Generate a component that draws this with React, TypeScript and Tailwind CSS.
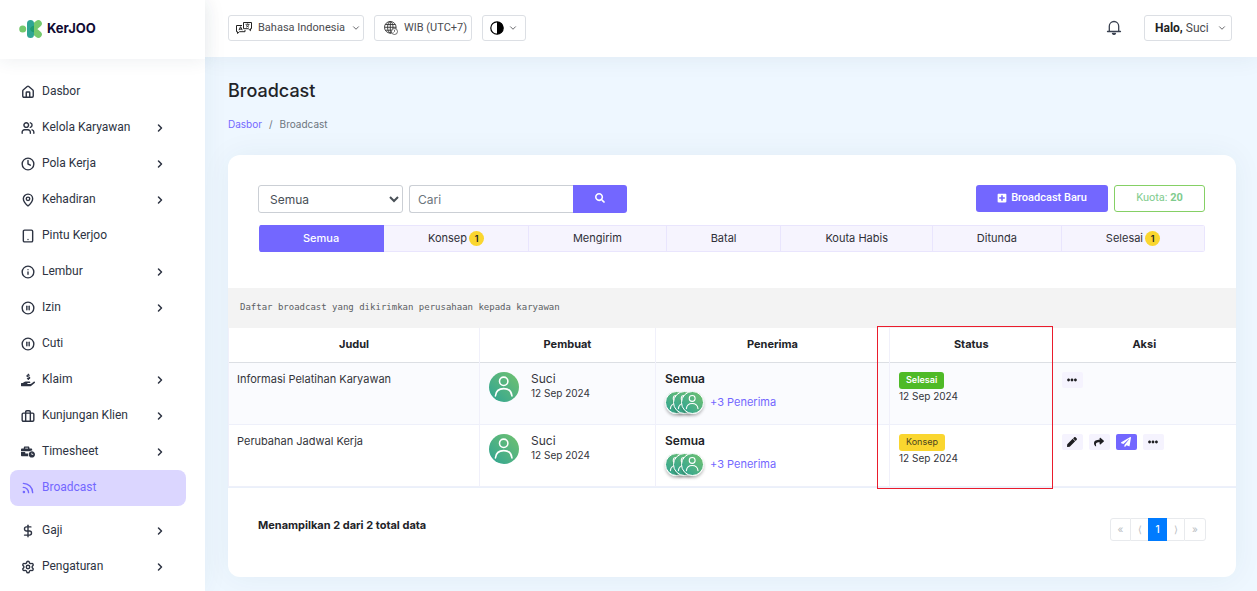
import type { ComponentType, ReactNode } from "react";
import {
  House,
  Users,
  Clock,
  MapPin,
  Tablet,
  Info,
  CirclePause,
  Rss,
  DollarSign,
  Settings,
  ChevronRight,
  ChevronDown,
} from "lucide-react";
import {
  FaHandHoldingUsd,
  FaBusinessTime,
  FaSearch,
  FaPlusSquare,
  FaPen,
  FaShare,
  FaPaperPlane,
  FaEllipsisH,
} from "react-icons/fa";
import clsx from "clsx";

type IconType = ComponentType<{ className?: string }>;

function Suitcase({ className }: { className?: string }) {
  return (
    <svg className={className} viewBox="0 0 24 24" fill="none" stroke="currentColor" strokeWidth="2.4" strokeLinejoin="round">
      <rect x="2" y="7" width="20" height="14" rx="2" />
      <path d="M8 21V5a2 2 0 0 1 2-2h4a2 2 0 0 1 2 2v16" />
    </svg>
  );
}

const NAV_ITEMS: { label: string; icon: IconType; sub?: boolean; active?: boolean }[] = [
  { label: "Dasbor", icon: House },
  { label: "Kelola Karyawan", icon: Users, sub: true },
  { label: "Pola Kerja", icon: Clock, sub: true },
  { label: "Kehadiran", icon: MapPin, sub: true },
  { label: "Pintu Kerjoo", icon: Tablet },
  { label: "Lembur", icon: Info, sub: true },
  { label: "Izin", icon: CirclePause, sub: true },
  { label: "Cuti", icon: CirclePause },
  { label: "Klaim", icon: FaHandHoldingUsd, sub: true },
  { label: "Kunjungan Klien", icon: Suitcase, sub: true },
  { label: "Timesheet", icon: FaBusinessTime, sub: true },
  { label: "Broadcast", icon: Rss, active: true },
  { label: "Gaji", icon: DollarSign, sub: true },
  { label: "Pengaturan", icon: Settings, sub: true },
];

const TABS: { label: string; count?: number }[] = [
  { label: "Semua" },
  { label: "Konsep", count: 1 },
  { label: "Mengirim" },
  { label: "Batal" },
  { label: "Kouta Habis" },
  { label: "Ditunda" },
  { label: "Selesai", count: 1 },
];

const ROWS = [
  { title: "Informasi Pelatihan Karyawan", author: "Suci", date: "12 Sep 2024", status: "Selesai" },
  { title: "Perubahan Jadwal Kerja", author: "Suci", date: "12 Sep 2024", status: "Konsep" },
];

function Logo() {
  return (
    <a href="#" className="flex items-center gap-1 text-[13px] font-bold text-[#110a33]">
      <svg className="h-5 w-6" viewBox="0 0 24 20">
        <circle cx="3.7" cy="10" r="3.5" fill="#76c96d" />
        <path d="M13 10 19.3 4.6M13 10l6.3 5.4" stroke="#76c96d" strokeWidth="7" strokeLinecap="round" />
        <rect x="8" y="1" width="7" height="18" rx="3.5" fill="#2fa594" />
        <path d="M15 6.8v6.4a4.6 4.6 0 0 1-4-3.2 4.6 4.6 0 0 1 4-3.2Z" fill="#1f9a72" />
      </svg>
      KerJOO
    </a>
  );
}

function Sidebar() {
  return (
    <aside className="relative z-10 w-[205px] shrink-0 bg-white shadow-[0_0_24px_rgba(40,60,90,0.06)]">
      <div className="flex h-[59px] items-center px-[19px] pb-0.5 shadow-[0_2px_16px_rgba(40,60,90,0.08)]">
        <Logo />
      </div>
      <nav className="pt-[15px] pr-[19px] pl-2.5 font-['Roboto',sans-serif] text-xs">
        {NAV_ITEMS.map(({ label, icon: Icon, sub, active }) => (
          <a
            key={label}
            href="#"
            className={clsx(
              "flex h-9 items-center gap-[7px] rounded-lg pr-5 pl-[11px]",
              active ? "mb-[7px] bg-[#dbd6ff] text-[#7367ff]" : "text-[#2d3342]"
            )}
            aria-current={active ? "page" : undefined}
          >
            <Icon className="size-[14px] shrink-0 [&.lucide]:stroke-[2.4]" />
            <span className="flex-1 pb-0.5">{label}</span>
            {sub && <ChevronRight className="size-3" strokeWidth={3} />}
          </a>
        ))}
      </nav>
    </aside>
  );
}

function TranslateIcon() {
  return (
    <svg className="h-3 w-4 shrink-0" viewBox="0 0 16 12" fill="none" stroke="#222" strokeWidth="1">
      <path d="M7.5.5h8v6.2h-1v2L12.3 6.7H7.5Z" />
      <path d="M6 3.5H.5v6.2h1v1.8l2-1.8H9V8" />
      <path d="M9.5 2.3h4M11.5 1.5v.8M10 5.2c1.5-.5 2.5-1.5 2.8-2.8M10.3 3.2c.5 1 1.5 1.7 2.7 2" strokeWidth=".8" />
      <path d="m3 8.2 1.6-3.5 1.6 3.5M3.6 7.1h2" />
    </svg>
  );
}

function GlobeIcon() {
  return (
    <svg className="size-3.5 shrink-0" viewBox="0 0 14 14" fill="none" stroke="#333" strokeWidth=".9">
      <circle cx="6.3" cy="6.3" r="5.8" />
      <ellipse cx="6.3" cy="6.3" rx="2.7" ry="5.8" />
      <path d="M.5 6.3h11.6M1.3 3.5h10M1.3 9.2h7M6.3.5v11.6" />
      <circle cx="10.5" cy="10.5" r="3" fill="#fff" strokeWidth=".7" />
      <path d="M10.5 8.8v1.7l-1 1" strokeWidth=".7" />
    </svg>
  );
}

function ContrastIcon() {
  return (
    <svg className="size-3.5" viewBox="0 0 14 14">
      <circle cx="7" cy="7" r="6.2" fill="#fff" stroke="#000" strokeWidth="1.2" />
      <path d="M7 .8a6.2 6.2 0 0 1 0 12.4Z" fill="#000" />
    </svg>
  );
}

function BellIcon() {
  return (
    <svg className="size-4" viewBox="0 0 16 16" fill="none" stroke="#3a4150" strokeWidth="1.3" strokeLinecap="round" strokeLinejoin="round">
      <path d="M1.5 11.5h13M3.3 11.5V6.2a4.7 4.7 0 0 1 9.4 0v5.3" />
      <path d="M6.5 13.5c.7 1.2 2.3 1.2 3 0Z" fill="#3a4150" />
    </svg>
  );
}

function HeaderButton({ className, children, label }: { className?: string; children: ReactNode; label?: string }) {
  return (
    <button
      aria-label={label}
      className={clsx(
        "flex h-[26px] items-center rounded-[3px] border border-[#dcdfe4] font-['Roboto',sans-serif] whitespace-nowrap text-[#4b4b4f]",
        className
      )}
    >
      {children}
    </button>
  );
}

function Topbar() {
  return (
    <header className="flex h-[57px] items-center gap-2.5 bg-white pr-[25px] pb-px pl-[23px] shadow-[0_0_24px_rgba(40,60,90,0.08)]">
      <HeaderButton className="w-[136px] gap-1.5 pr-1.5 pl-[7px] text-[11px]">
        <TranslateIcon />
        Bahasa Indonesia
        <ChevronDown className="ml-auto size-2.5 shrink-0" />
      </HeaderButton>
      <HeaderButton className="w-[98px] gap-1.5 pl-[9px] text-[11px]">
        <GlobeIcon />
        WIB (UTC+7)
      </HeaderButton>
      <HeaderButton className="gap-1 px-[7px]" label="Tema">
        <ContrastIcon />
        <ChevronDown className="size-2.5" />
      </HeaderButton>
      <button className="mr-3 ml-auto" aria-label="Notifikasi">
        <BellIcon />
      </button>
      <HeaderButton className="w-[88px] pr-1 pl-2.5 text-xs">
        <span>
          <b className="text-[#222]">Halo,</b> Suci
        </span>
        <ChevronDown className="ml-auto size-2.5" />
      </HeaderButton>
    </header>
  );
}

function Avatar({ className }: { className?: string }) {
  return (
    <span
      className={clsx(
        "flex shrink-0 items-center justify-center rounded-full bg-linear-to-tr from-[#2aa392] to-[#70c26d]",
        className
      )}
    >
      <svg className="size-[78%]" viewBox="0 0 24 24" fill="none" stroke="#fff" strokeWidth="1.6" strokeLinecap="round">
        <circle cx="12" cy="6.5" r="4.3" />
        <path d="M3.5 21.5c.5-5 4-7.500 8.500-7.500s8 2.500 8.500 7.500" />
      </svg>
    </span>
  );
}

function Filters() {
  return (
    <div className="flex items-start">
      <select
        aria-label="Filter"
        defaultValue="Semua"
        className="h-7 w-[145px] rounded-[3px] border border-[#cbcfd5] bg-white pl-[7px] text-xs text-[#495057]"
      >
        <option>Semua</option>
      </select>
      <input
        aria-label="Cari"
        placeholder="Cari"
        className="ml-1.5 h-7 w-[164px] rounded-l-[3px] border border-r-0 border-[#cbcfd5] px-2 text-xs placeholder:text-[#6c757d]"
      />
      <button
        aria-label="Cari broadcast"
        className="flex h-7 w-[54px] items-center justify-center rounded-r-[3px] bg-[#7367ff] pb-0.5 text-white"
      >
        <FaSearch className="size-2.5" />
      </button>
      <button className="ml-auto flex h-[27px] w-[132px] items-center justify-center gap-1 rounded-[3px] bg-[#7367ff] pb-px font-['Roboto',sans-serif] text-[11px] font-medium text-white">
        <FaPlusSquare className="size-2.5" />
        Broadcast Baru
      </button>
      <button className="ml-1.5 h-[27px] w-[91px] rounded-[3px] border border-[#85d065] pb-px font-['Roboto',sans-serif] text-[11px] text-[#7fcb8e]">
        Kuota: <b>20</b>
      </button>
    </div>
  );
}

function StatusTabs() {
  return (
    <div className="mt-3 ml-px flex h-[27px] overflow-hidden rounded-[3px] text-[11px]">
      {TABS.map(({ label, count }, i) => (
        <button
          key={label}
          className={clsx(
            "flex flex-auto items-center justify-center gap-0.5 border-y border-r px-4",
            i === 0 ? "border-[#7367ff] bg-[#7367ff] font-medium text-white" : "border-[#e9e5fd] bg-[#f6f4fe] text-[#2f3038]"
          )}
        >
          {label}
          {count && (
            <span className="flex size-[15px] items-center justify-center rounded-full bg-[#fad62f] text-[9px] font-semibold text-[#222]">
              {count}
            </span>
          )}
        </button>
      ))}
    </div>
  );
}

function ActionButton({ icon: Icon, label, primary }: { icon: IconType; label: string; primary?: boolean }) {
  return (
    <button
      aria-label={label}
      className={clsx(
        "flex h-4 w-[21px] items-center justify-center rounded-[2px]",
        primary ? "bg-[#7367ff] text-white" : "bg-[#f5f3fe] text-[#1e1e22]"
      )}
    >
      <Icon className="size-2.5" />
    </button>
  );
}

function BroadcastTable() {
  return (
    <table className="w-full table-fixed border-collapse text-[11px] text-[#34353b]">
      <colgroup>
        <col className="w-[251px]" />
        <col className="w-[176px]" />
        <col className="w-[234px]" />
        <col className="w-[163px]" />
        <col className="w-[184px]" />
      </colgroup>
      <thead>
        <tr className="h-[34px] border-b border-[#dcdfe4] font-semibold text-[#222328]">
          <th className="border-x border-[#f0f0fa] pb-0.5">Judul</th>
          <th className="border-r border-[#f0f0fa] pb-0.5">Pembuat</th>
          <th className="border-r border-[#f0f0fa] pb-0.5">Penerima</th>
          <th className="relative pb-0.5">
            Status
            {/* highlight around the whole status column */}
            <span className="pointer-events-none absolute -top-0.5 right-0 -left-[13px] h-[163px] border border-[#ea1c2c]" />
          </th>
          <th className="border-r border-[#f0f0fa] pb-0.5">Aksi</th>
        </tr>
      </thead>
      <tbody>
        {ROWS.map((row) => (
          <tr key={row.title} className="h-[62px] border-b border-[#eef0fa] align-top odd:bg-[#fafbfe]">
            <td className="border-x border-[#f0f0fa] px-2 pt-2">{row.title}</td>
            <td className="border-r border-[#f0f0fa] px-[9px] pt-[9px]">
              <div className="flex gap-3">
                <Avatar className="size-[30px]" />
                <div>
                  <div className="text-xs leading-[14px]">{row.author}</div>
                  <div className="text-[10px] leading-[14px]">{row.date}</div>
                </div>
              </div>
            </td>
            <td className="border-r border-[#f0f0fa] px-[9px] pt-2">
              <div className="text-xs leading-4 font-semibold text-[#222328]">Semua</div>
              <div className="mt-1 flex items-center">
                <Avatar className="size-[23px] border border-white shadow-[0_2px_3px_rgba(0,0,0,0.25)]" />
                <Avatar className="-ml-[15px] size-[23px] border border-white shadow-[0_2px_3px_rgba(0,0,0,0.25)]" />
                <Avatar className="-ml-[15px] size-[23px] border border-white shadow-[0_2px_3px_rgba(0,0,0,0.25)]" />
                <a href="#" className="ml-1.5 text-[11px] text-[#7367ff]">
                  +3 Penerima
                </a>
              </div>
            </td>
            <td className="px-[9px] pt-[9px]">
              <div
                className={clsx(
                  "flex h-[17px] w-fit items-center rounded-[3px] px-[7px] text-[9px]",
                  row.status === "Selesai" ? "bg-[#4fba27] font-semibold text-white" : "bg-[#fad62f] text-[#4a4420]"
                )}
              >
                {row.status}
              </div>
              <div className="text-[10px] leading-[14px]">{row.date}</div>
            </td>
            <td className="border-r border-[#f0f0fa] px-[9px] pt-[9px]">
              <div className="flex items-center gap-1.5">
                {row.status === "Konsep" && (
                  <>
                    <ActionButton icon={FaPen} label="Ubah" />
                    <ActionButton icon={FaShare} label="Teruskan" />
                    <ActionButton icon={FaPaperPlane} label="Kirim" primary />
                  </>
                )}
                <ActionButton icon={FaEllipsisH} label="Lainnya" />
              </div>
            </td>
          </tr>
        ))}
      </tbody>
    </table>
  );
}

function Pagination() {
  return (
    <nav aria-label="Halaman" className="flex h-[23px] text-[10px] text-[#b9bdc2]">
      <button className="w-[21px] rounded-l-[3px] border border-[#e8eaed]">«</button>
      <button className="w-[17px] border-y border-[#e8eaed]">⟨</button>
      <button className="w-[19px] bg-[#007bff] font-medium text-white">1</button>
      <button className="w-[17px] border-y border-[#e8eaed]">⟩</button>
      <button className="w-[22px] rounded-r-[3px] border border-[#e8eaed]">»</button>
    </nav>
  );
}

export default function App() {
  return (
    <div className="flex min-h-screen bg-[#eef7ff] font-['Inter','Liberation_Sans',sans-serif]">
      <Sidebar />
      <div className="min-w-0 flex-1">
        <Topbar />
        <main className="pt-[22px] pr-[21px] pb-3.5 pl-[23px]">
          <h1 className="text-lg leading-6 font-medium text-[#222328]">Broadcast</h1>
          <nav className="mt-3.5 flex gap-[7px] text-[10px] leading-[14px] text-[#6c757d]">
            <a href="#" className="text-[#7367ff]">
              Dasbor
            </a>
            <span>/</span>
            <span>Broadcast</span>
          </nav>

          <section className="mt-6 overflow-hidden rounded-xl bg-white shadow-[0_0_30px_rgba(40,60,90,0.06)]">
            <div className="pt-[30px] pr-[31px] pb-9 pl-[30px]">
              <Filters />
              <StatusTabs />
            </div>
            <p className="h-10 bg-[#f3f3f3] px-3 pt-3 font-['DejaVu_Sans_Mono',monospace] text-[9px] leading-[14px] text-[#5b5e63]">
              Daftar broadcast yang dikirimkan perusahaan kepada karyawan
            </p>
            <div className="border-b border-[#eaf0fa]">
              <BroadcastTable />
            </div>
            <div className="flex items-start justify-between px-[30px] pt-[30px] pb-9">
              <p className="text-[11px] leading-[14px] font-bold text-[#222328]">Menampilkan 2 dari 2 total data</p>
              <Pagination />
            </div>
          </section>
        </main>
      </div>
    </div>
  );
}
